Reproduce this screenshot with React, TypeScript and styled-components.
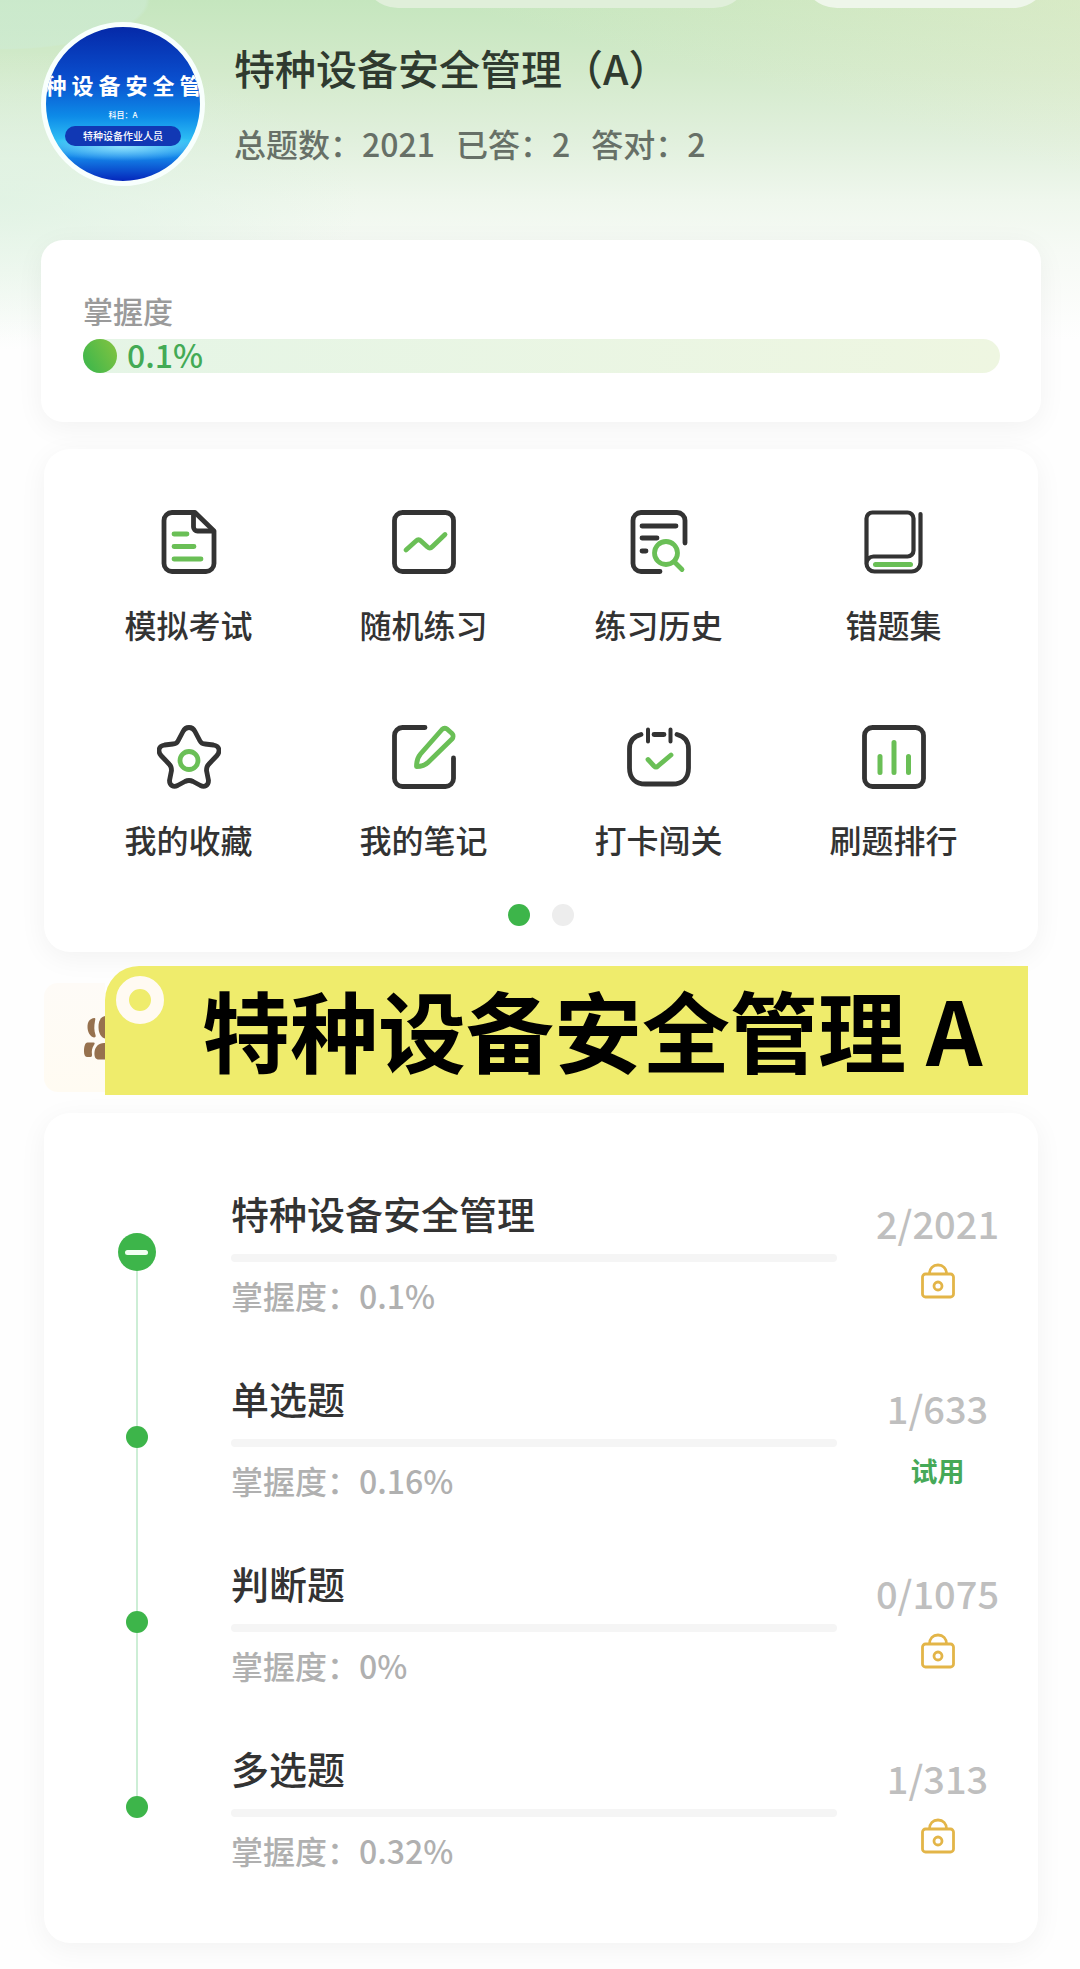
import React from "react";
import styled, { createGlobalStyle } from "styled-components";

const GlobalStyle = createGlobalStyle`
  *, *::before, *::after { box-sizing: border-box; }
  body {
    margin: 0;
    background: #fefefe;
    color: #333;
    font-family: "Noto Sans CJK SC", sans-serif;
    font-weight: 500;
  }
  button {
    margin: 0;
    padding: 0;
    border: 0;
    background: none;
    color: inherit;
    font: inherit;
    cursor: pointer;
  }
  h1, h2, p, ul, ol { margin: 0; padding: 0; font-weight: inherit; }
  ul, ol { list-style: none; }
`;

const Page = styled.div`
  overflow: hidden;
  padding: 0 39px 26px 41px;
  background:
    radial-gradient(ellipse 150px 50px at 0 0, rgba(206, 235, 212, 0.6) 97%, rgba(206, 235, 212, 0) 100%) no-repeat,
    radial-gradient(ellipse 360px 150px at 0 200px, rgba(222, 242, 226, 0.8), rgba(222, 242, 226, 0)) no-repeat,
    linear-gradient(195deg, rgba(244, 240, 210, 0.4), rgba(244, 240, 210, 0) 28%) 0 0 / 100% 340px no-repeat,
    linear-gradient(180deg, #c5e6be 0, #d3eacb 70px, #e1f0dd 140px, #eff7ed 200px, #f6faf5 250px, #fefefe 340px);
`;

const TopBar = styled.div`
  display: flex;
  justify-content: flex-end;
  align-items: flex-end;
  gap: 51px;
  height: 8px;
  margin-right: -8px;
`;

const TopPill = styled.div<{ $width: number; $color: string }>`
  flex: none;
  width: ${(p) => p.$width}px;
  height: 72px;
  border-radius: 36px;
  background: ${(p) => p.$color};
`;

const Profile = styled.header`
  display: flex;
  align-items: flex-start;
  gap: 29px;
  padding: 14px 0 54px;
`;

const Avatar = styled.div`
  flex: none;
  display: flex;
  flex-direction: column;
  align-items: center;
  width: 164px;
  height: 164px;
  padding-top: 42px;
  overflow: hidden;
  border: 5px solid #f8fffd;
  border-radius: 50%;
  color: #fff;
  white-space: nowrap;
  background:
    radial-gradient(ellipse 80px 14px at 50% 120px, rgba(160, 232, 255, 0.85), rgba(160, 232, 255, 0)),
    linear-gradient(180deg, #0529a8 0, #0a4fce 34%, #0d8be8 58%, #2fc0f5 74%, #1488ea 84%, #0526bb 100%);
`;

const AvatarTitle = styled.span`
  font-size: 22px;
  font-weight: 700;
  line-height: 30px;
`;

const AvatarNote = styled.span`
  margin-top: 9px;
  font-size: 8px;
  line-height: 14px;
`;

const AvatarTag = styled.span`
  width: 116px;
  margin-top: 4px;
  border-radius: 10px;
  background: #1138b4;
  font-size: 10px;
  line-height: 20px;
  text-align: center;
`;

const ProfileText = styled.div`
  padding-top: 15px;
`;

const Title = styled.h1`
  font-size: 41px;
  font-weight: 500;
  line-height: 60px;
  color: #2f3a2f;
`;

const Stats = styled.p`
  display: flex;
  gap: 21px;
  margin-top: 24px;
  font-size: 32px;
  line-height: 44px;
  color: #677067;
`;

const shadow = "0 6px 28px rgba(0, 0, 0, 0.05)";

const MasteryCard = styled.section`
  padding: 48px 41px 49px 42px;
  border-radius: 22px;
  background: #fff;
  box-shadow: ${shadow};
`;

const MasteryLabel = styled.h2`
  font-size: 30px;
  font-weight: 500;
  line-height: 44px;
  color: #9a9a9a;
`;

const MasteryTrack = styled.div`
  display: flex;
  align-items: center;
  gap: 10px;
  height: 34px;
  margin-top: 7px;
  border-radius: 17px;
  background: linear-gradient(90deg, #e5f5e6, #eef6e1);
`;

const MasteryFill = styled.div`
  min-width: 34px;
  height: 34px;
  border-radius: 17px;
  background: linear-gradient(60deg, #46b84a 20%, #86c440);
`;

const MasteryValue = styled.span`
  padding-bottom: 4px;
  font-size: 32px;
  line-height: 34px;
  color: #43aa55;
`;

const Card = styled.section`
  margin: 0 3px;
  border-radius: 26px;
  background: #fff;
  box-shadow: ${shadow};
`;

const MenuCard = styled(Card)`
  margin-top: 27px;
  padding: 61px 27px 26px;
`;

const MenuGrid = styled.ul`
  display: grid;
  grid-template-columns: repeat(4, 1fr);
  row-gap: 72px;
`;

const MenuButton = styled.button`
  display: flex;
  flex-direction: column;
  align-items: center;
  gap: 21px;
  width: 100%;
  font-size: 32px;
  line-height: 58px;
  svg { display: block; }
`;

const Dots = styled.div`
  display: flex;
  justify-content: center;
  gap: 22px;
  margin-top: 36px;
`;

const Dot = styled.button<{ $active?: boolean }>`
  width: 22px;
  height: 22px;
  border-radius: 50%;
  background: ${(p) => (p.$active ? "#3db54a" : "#ededed")};
`;

const Notice = styled.section`
  display: flex;
  align-items: stretch;
  margin: 14px 3px 0;
`;

const NoticeStub = styled.div`
  flex: none;
  display: flex;
  align-items: center;
  justify-content: flex-end;
  width: 61px;
  margin: 17px 0 3px;
  border-radius: 14px 0 0 14px;
  background: linear-gradient(180deg, #fefbf7, #fffbf2);
`;

const Banner = styled.div`
  flex: 1;
  display: flex;
  align-items: flex-start;
  margin-right: 10px;
  padding: 10px 11px 0;
  height: 129px;
  border-radius: 34px 0 0 0;
  background: #efec6c;
`;

const Ring = styled.span`
  flex: none;
  width: 48px;
  height: 48px;
  border: 13px solid #fffaf2;
  border-radius: 50%;
`;

const BannerText = styled.h2`
  margin-left: 38px;
  font-size: 88px;
  font-weight: 700;
  line-height: 104px;
  color: #000;
  white-space: nowrap;
`;

const ChapterCard = styled(Card)`
  margin-top: 18px;
  padding: 74px 0 16px;
`;

const Chapter = styled.li`
  display: grid;
  grid-template-columns: 187px 1fr 201px;
`;

const Rail = styled.div`
  display: flex;
  flex-direction: column;
  align-items: center;
  padding-right: 2px;
`;

const Line = styled.span<{ $height?: number; $hidden?: boolean }>`
  flex: ${(p) => (p.$height ? "none" : "1")};
  width: 2px;
  height: ${(p) => (p.$height ? `${p.$height}px` : "auto")};
  background: ${(p) => (p.$hidden ? "transparent" : "#cdeed6")};
`;

const Node = styled.span`
  width: 22px;
  height: 22px;
  border-radius: 50%;
  background: #3db54a;
`;

const Collapse = styled.button`
  display: flex;
  align-items: center;
  justify-content: center;
  width: 38px;
  height: 38px;
  border-radius: 50%;
  background: #3db54a;
  &::before {
    content: "";
    width: 23px;
    height: 5px;
    border-radius: 3px;
    background: #f1fff2;
  }
`;

const ChapterBody = styled.div`
  padding-bottom: 55px;
`;

const ChapterTitle = styled.h2`
  font-size: 38px;
  font-weight: 500;
  line-height: 52px;
`;

const ChapterTrack = styled.div`
  height: 8px;
  margin-top: 15px;
  border-radius: 4px;
  background: #f5f5f5;
`;

const ChapterMastery = styled.p`
  margin-top: 11px;
  font-size: 32px;
  line-height: 44px;
  color: #b0b0b0;
`;

const ChapterSide = styled.div`
  display: flex;
  flex-direction: column;
  align-items: center;
  padding-top: 10px;
`;

const Count = styled.span`
  font-size: 38px;
  line-height: 52px;
  color: #bfbfbf;
`;

const Action = styled.button`
  display: flex;
  align-items: center;
  justify-content: center;
  height: 36px;
  margin-top: 14px;
`;

const Trial = styled(Action)`
  margin-top: 18px;
  font-size: 27px;
  font-weight: 700;
  color: #46a958;
`;

const DARK = "#333";
const GREEN = "#6abf56";

const Icon = ({ children }: { children: React.ReactNode }) => (
  <svg width="64" height="64" viewBox="0 0 64 64" fill="none" stroke={DARK} strokeWidth="4.8" strokeLinecap="round" strokeLinejoin="round" aria-hidden="true">
    {children}
  </svg>
);

const ExamIcon = () => (
  <Icon>
    <path d="M38 2.500H15a8 8 0 0 0-8 8v43a8 8 0 0 0 8 8h34a8 8 0 0 0 8-8V21z" />
    <path d="M36.500 4v13a4 4 0 0 0 4 4h15" />
    <path d="M17 24h13M17 36.500h20M17 49h27" stroke={GREEN} />
  </Icon>
);

const RandomIcon = () => (
  <Icon>
    <rect x="2.500" y="2.500" width="59" height="59" rx="8" />
    <path d="M14 40L24 31Q26.500 28.500 29 31L35.500 37Q38 39 40.500 36.500L53 24.500" stroke={GREEN} />
  </Icon>
);

const HistoryIcon = () => (
  <Icon>
    <path d="M33 61.500H14a8 8 0 0 1-8-8v-43a8 8 0 0 1 8-8h36a8 8 0 0 1 8 8V33" />
    <path d="M15 16h34M15 28h15M15 41h4" />
    <circle cx="39" cy="43" r="11.500" stroke={GREEN} />
    <path d="M47 51.500l8 8" stroke={GREEN} />
  </Icon>
);

const MistakesIcon = () => (
  <Icon>
    <path d="M4.500 54V8.500a6 6 0 0 1 6-6h35a6 6 0 0 1 6 6v32a6 6 0 0 1-6 6H11.500a7 7 0 0 0-7 7a8 8 0 0 0 8 8h37a9 9 0 0 0 9-9V4" strokeWidth="4.200" />
    <path d="M13.500 54.500h35" stroke={GREEN} strokeWidth="5" />
  </Icon>
);

const StarIcon = () => (
  <Icon>
    <path d="M32 2.500c3 0 5 2 6 4l5 9.500c1 2 2 3 5 3l8.500 1c6 1 7 6 3.500 10.500l-8.500 9c-2 2-2 3-2 6l2 10c0 5-4 7-8 5l-7.500-4c-3-1.500-5-1.500-8 0l-7.500 4c-4 2-8 0-8-5l2-10c0-3 0-4-2-6l-8.500-9c-3.500-4.500-2.500-9.500 3.500-10.500l8.500-1c3 0 4-1 5-3l5-9.500c1-2 3-4 6-4z" />
    <circle cx="32" cy="35.500" r="9" stroke={GREEN} />
  </Icon>
);

const NotesIcon = () => (
  <Icon>
    <path d="M33 2.500H10.500a8 8 0 0 0-8 8v43a8 8 0 0 0 8 8h43a8 8 0 0 0 8-8V33" />
    <path d="M50 4.500a4 4 0 0 1 5-.5l5 4.500a4 4 0 0 1 0 5.500L36 37.500c-3 3-8 4-11.500 4c0-4 1-9 4-12.500z" stroke={GREEN} />
  </Icon>
);

const CheckInIcon = () => (
  <Icon>
    <path d="M14 9.500C6 11.500 2.500 17 2.500 24v19c0 10 6 16 16 16h27c10 0 16-6 16-16V24c0-7-3.500-12.500-11.500-14.500M27 9.500h10" />
    <path d="M21 4.500v12M43.500 4.500v12" strokeWidth="4" />
    <path d="M21 34.500l6 6.500q2 2 4 0L44 30" stroke={GREEN} />
  </Icon>
);

const RankIcon = () => (
  <Icon>
    <rect x="2.500" y="2.500" width="59" height="59" rx="8" />
    <path d="M18 31.500v16M32 17.500v30M46.500 31.500v16" stroke={GREEN} strokeWidth="5" />
  </Icon>
);

const PeopleIcon = () => (
  <svg width="21" height="44" viewBox="0 0 21 44" fill="#96714e" aria-hidden="true">
    <path d="M10.500 2C5.500 2.500 3.500 6 3.500 11c0 5 2.500 9.500 6.500 10.500c1.500 0 2-1 1.500-2.500c-1.500-4.500-1.500-9-.5-14c.5-2 .5-3-.5-3z" />
    <path d="M21 0c-4.500 1-6.500 5-6.500 11S17 21.500 21 22.500z" />
    <path d="M3.500 26.500H9.500c1.500 0 1.500 1 .5 2.500c-2 3-2.500 6-2 9.500c0 1.500 0 2.500-1.500 2.500H3.500c-2.500 0-3.500-2-3.500-5.500c0-5 1-9 3.500-9z" />
    <path d="M21 27c-6-.5-10 3.500-10.500 9c-.5 5 1 7.500 4.500 7.500h6z" />
  </svg>
);

const LockIcon = () => (
  <svg width="36" height="36" viewBox="0 0 36 36" fill="none" stroke="#e3b548" strokeWidth="2.800" aria-hidden="true">
    <path d="M9.500 11C9.500 5.500 13 2 18 2s8.500 3.500 8.500 9" />
    <rect x="2.500" y="11" width="31" height="23" rx="3" />
    <circle cx="18" cy="23" r="4" />
  </svg>
);

const menu = [
  { label: "模拟考试", icon: <ExamIcon /> },
  { label: "随机练习", icon: <RandomIcon /> },
  { label: "练习历史", icon: <HistoryIcon /> },
  { label: "错题集", icon: <MistakesIcon /> },
  { label: "我的收藏", icon: <StarIcon /> },
  { label: "我的笔记", icon: <NotesIcon /> },
  { label: "打卡闯关", icon: <CheckInIcon /> },
  { label: "刷题排行", icon: <RankIcon /> },
];

const chapters = [
  { title: "特种设备安全管理", mastery: "0.1%", count: "2/2021", trial: false },
  { title: "单选题", mastery: "0.16%", count: "1/633", trial: true },
  { title: "判断题", mastery: "0%", count: "0/1075", trial: false },
  { title: "多选题", mastery: "0.32%", count: "1/313", trial: false },
];

export default function App() {
  return (
    <>
      <GlobalStyle />
      <Page>
        <TopBar>
          <TopPill $width={388} $color="#e0efda" />
          <TopPill $width={248} $color="#eef6ea" />
        </TopBar>
        <Profile>
          <Avatar>
            <AvatarTitle>特 种 设 备 安 全 管 理</AvatarTitle>
            <AvatarNote>科目：A</AvatarNote>
            <AvatarTag>特种设备作业人员</AvatarTag>
          </Avatar>
          <ProfileText>
            <Title>特种设备安全管理（A）</Title>
            <Stats>
              <span>总题数：2021</span>
              <span>已答：2</span>
              <span>答对：2</span>
            </Stats>
          </ProfileText>
        </Profile>

        <MasteryCard>
          <MasteryLabel>掌握度</MasteryLabel>
          <MasteryTrack role="progressbar" aria-label="掌握度" aria-valuenow={0.1}>
            <MasteryFill style={{ width: "0.1%" }} />
            <MasteryValue>0.1%</MasteryValue>
          </MasteryTrack>
        </MasteryCard>

        <MenuCard>
          <MenuGrid>
            {menu.map((m) => (
              <li key={m.label}>
                <MenuButton type="button">
                  {m.icon}
                  {m.label}
                </MenuButton>
              </li>
            ))}
          </MenuGrid>
          <Dots>
            <Dot type="button" aria-label="1" $active />
            <Dot type="button" aria-label="2" />
          </Dots>
        </MenuCard>

        <Notice>
          <NoticeStub>
            <PeopleIcon />
          </NoticeStub>
          <Banner>
            <Ring />
            <BannerText>特种设备安全管理 A</BannerText>
          </Banner>
        </Notice>

        <ChapterCard>
          <ol>
            {chapters.map((c, i) => (
              <Chapter key={c.title}>
                <Rail>
                  <Line $height={i === 0 ? 46 : 54} $hidden={i === 0} />
                  {i === 0 ? <Collapse type="button" aria-label="收起" /> : <Node />}
                  <Line $hidden={i === chapters.length - 1} />
                </Rail>
                <ChapterBody>
                  <ChapterTitle>{c.title}</ChapterTitle>
                  <ChapterTrack />
                  <ChapterMastery>掌握度：{c.mastery}</ChapterMastery>
                </ChapterBody>
                <ChapterSide>
                  <Count>{c.count}</Count>
                  {c.trial ? (
                    <Trial type="button">试用</Trial>
                  ) : (
                    <Action type="button" aria-label="解锁">
                      <LockIcon />
                    </Action>
                  )}
                </ChapterSide>
              </Chapter>
            ))}
          </ol>
        </ChapterCard>
      </Page>
    </>
  );
}
